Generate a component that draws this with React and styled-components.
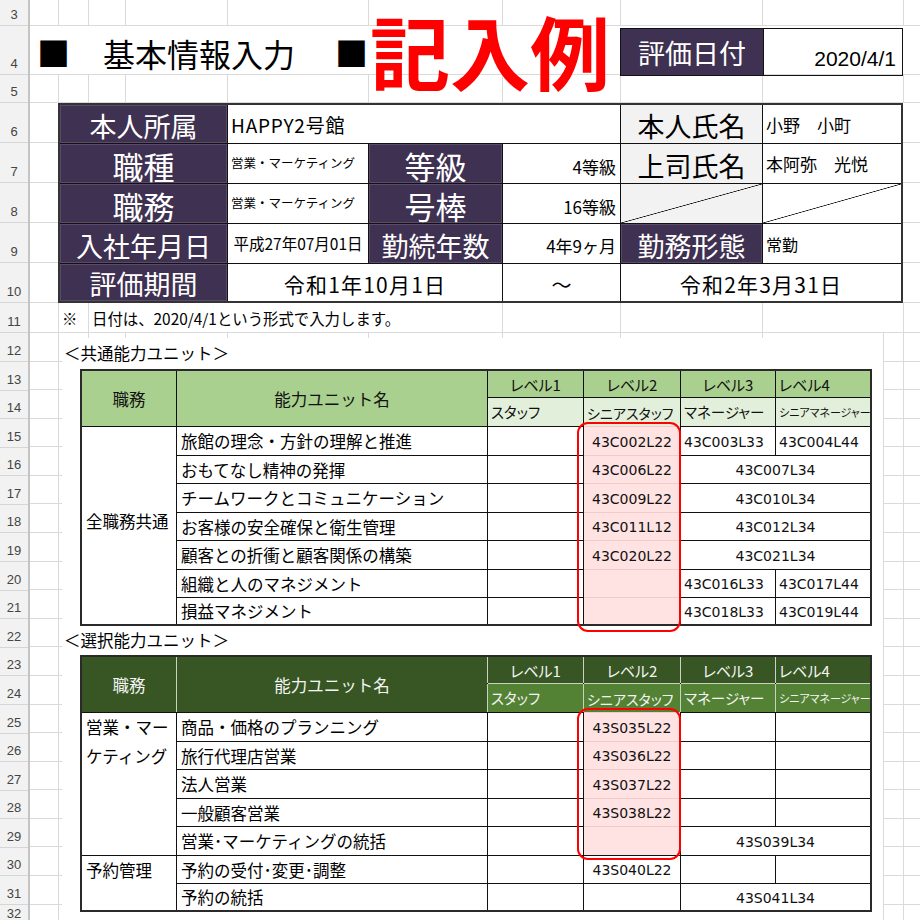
import React from 'react';
import styled, { createGlobalStyle } from 'styled-components';

const JP = `"Noto Sans CJK JP", "Noto Sans", sans-serif`;
const CODE = `"DejaVu Sans", Verdana, sans-serif`;
const GRID = '#dadada';
const PURPLE = '#3f3151';
const PINK = '#ffe3e3';

const vl = (x) => `linear-gradient(${GRID},${GRID}) ${x}px 0 / 1px 100% no-repeat`;
const vseg = (x, y, h) => `linear-gradient(${GRID},${GRID}) ${x}px ${y}px / 1px ${h}px no-repeat`;
const hl = (y) => `linear-gradient(${GRID},${GRID}) 0 ${y}px / 100% 1px no-repeat`;
const COLS = [28, 58, 95, 197, 338, 472, 590, 732, 873];

const GlobalStyle = createGlobalStyle`
  html, body { margin: 0; padding: 0; background: #fff; }
  body { font-family: ${JP}; color: #000; overflow: hidden; }
`;

const Sheet = styled.div`
  display: flex;
  width: 920px;
  height: 920px;
  overflow: hidden;
  background: #fff;
`;

const RowHeaderCol = styled.div`
  width: 28px;
  flex-shrink: 0;
  background: #f2f2f2;
  border-right: 2px solid #c4c4c4;
  display: flex;
  flex-direction: column;
`;

const RowNum = styled.div`
  height: ${(p) => p.$h}px;
  flex-shrink: 0;
  box-sizing: border-box;
  border-bottom: 1px solid #d6d6d6;
  display: flex;
  align-items: flex-end;
  justify-content: center;
  padding-bottom: 3px;
  font: 13px/14px "Liberation Sans", Arial, sans-serif;
  color: #444;
`;

const Body = styled.div`
  flex: 1;
  min-width: 0;
  display: flex;
  flex-direction: column;
`;

/* rows 3-5: gridlines hidden in row 4 where the title text overflows */
const TopBand = styled.div`
  height: 103px;
  flex-shrink: 0;
  display: flex;
  align-items: center;
  background: ${[
    hl(25), hl(74), hl(102),
    ...COLS.map((x) => vseg(x, 0, 26)),
    ...COLS.map((x) => vseg(x, 75, 28)),
  ].join(',')};
`;

const SquareMark = styled.div`
  width: ${(p) => p.$w}px;
  margin-left: ${(p) => p.$ml || 0}px;
  flex-shrink: 0;
  font-size: 33px;
  line-height: 1.2;
  padding-top: 2px;
`;

const TitleText = styled.div`
  width: 232px;
  flex-shrink: 0;
  font-size: 32px;
  line-height: 1.2;
  padding-top: 4px;
`;

const StampText = styled.div`
  width: 250px;
  flex-shrink: 0;
  font-size: 80px;
  font-weight: 700;
  line-height: 1.2;
  color: #ff0000;
  white-space: nowrap;
  margin-top: -6px;
`;

const DateBox = styled.div`
  display: flex;
  width: 283px;
  height: 48px;
  margin-top: 1px;
  box-sizing: border-box;
  border: 1px solid #111;
  flex-shrink: 0;
`;

const DateLabel = styled.div`
  width: 142px;
  background: ${PURPLE};
  color: #fff;
  font-size: 27px;
  display: flex;
  align-items: center;
  justify-content: center;
  border-right: 1px solid #111;
`;

const DateValue = styled.div`
  flex: 1;
  display: flex;
  align-items: flex-end;
  justify-content: flex-end;
  padding: 0 6px 6px 0;
  font: 21px/1 "Liberation Sans", Arial, sans-serif;
`;

const InfoBand = styled.div`
  height: 200px;
  flex-shrink: 0;
  padding-left: 28px;
  box-sizing: border-box;
  background: repeating-linear-gradient(to bottom, transparent 0 39px, ${GRID} 39px 40px);
`;

const InfoGrid = styled.div`
  display: grid;
  width: max-content;
  grid-template-columns: 167px 140px 133px 117px 141px 138px;
  grid-template-rows: 38px 39px 39px 39px 37px;
  gap: 1px;
  background: #111;
  border: 2px solid #333;
`;

const Label = styled.div`
  background: ${(p) => (p.$light ? '#f2f2f2' : PURPLE)};
  color: ${(p) => (p.$light ? '#000' : '#fff')};
  font-size: ${(p) => (p.$big ? 31 : 27)}px;
  line-height: 1;
  display: flex;
  align-items: flex-end;
  justify-content: center;
  padding-bottom: ${(p) => (p.$big ? 2 : 4)}px;
  box-shadow: ${(p) => (p.$light ? 'none' : 'inset 0 0 0 1px #5a4b6b')};
  white-space: nowrap;
`;

const Value = styled.div`
  grid-column: span ${(p) => p.$cs || 1};
  background: #fff;
  font-size: ${(p) => p.$fs || 17}px;
  letter-spacing: ${(p) => p.$ls || 0}px;
  line-height: 1;
  display: flex;
  align-items: center;
  justify-content: ${(p) => p.$align || 'flex-start'};
  padding: ${(p) => p.$pt || 0}px 4px 0 ${(p) => (p.$align === 'center' ? 4 : 3)}px;
  white-space: nowrap;
`;

const DiagCell = styled.div`
  background:
    linear-gradient(to bottom right, transparent calc(50% - 0.7px), #000 50%, transparent calc(50% + 0.7px)),
    ${(p) => (p.$gray ? '#f2f2f2' : '#fff')};
`;

const NoteRow = styled.div`
  height: 30px;
  flex-shrink: 0;
  box-sizing: border-box;
  border-bottom: 1px solid ${GRID};
  background: ${[28, 58, 472, 590, 732, 873].map(vl).join(',')};
  display: flex;
  align-items: center;
  padding-top: 3px;
  font-size: 15.4px;
  line-height: 1;
`;

const NoteMark = styled.span`
  width: 30px;
  margin-left: 32px;
  flex-shrink: 0;
`;

const LowerBand = styled.div`
  flex: 1;
  display: flex;
  padding-left: 32px;
  background:
    ${[28, 58, 95, 197, 338, 472, 590, 732, 853, 873].map(vl).join(',')},
    repeating-linear-gradient(to bottom, transparent 0 27.58px, ${GRID} 27.58px 28.58px);
`;

const WhiteArea = styled.div`
  width: 821px;
  margin-top: 5px;
  background: #fff;
  display: flex;
  flex-direction: column;
`;

const SectionLabel = styled.div`
  height: ${(p) => p.$h}px;
  display: flex;
  align-items: center;
  padding-left: 2px;
  font-size: 16.5px;
  line-height: 1;
  box-sizing: border-box;
`;

const UnitTable = styled.div`
  position: relative;
  display: grid;
  width: max-content;
  margin-left: 18px;
  grid-template-columns: 94px 310px 95px 96px 94px 94px;
  grid-template-rows: 26px 28px 28px 27px 28px 27px 28px 27px 26px;
  gap: 1px;
  background: #111;
  border: 2px solid #2a2a2a;
`;

const HeadCell = styled.div`
  grid-row: span ${(p) => p.$rs || 1};
  background: ${(p) => p.$bg};
  color: ${(p) => (p.$dark ? '#f4f4f4' : '#111')};
  font-size: ${(p) => p.$fs || 15}px;
  font-feature-settings: ${(p) => (p.$palt ? '"palt"' : 'normal')};
  line-height: 1;
  display: flex;
  align-items: center;
  justify-content: ${(p) => (p.$left ? 'flex-start' : 'center')};
  padding: 1px 0 0 ${(p) => (p.$left ? 3 : 0)}px;
  white-space: nowrap;
  box-shadow: ${(p) => p.$shadow || 'none'};
`;

const GroupCell = styled.div`
  grid-row: span ${(p) => p.$rs || 1};
  background: #fff;
  font-size: 16.5px;
  line-height: ${(p) => (p.$top ? '28.5px' : '1')};
  display: flex;
  align-items: ${(p) => (p.$top ? 'flex-start' : 'center')};
  padding: ${(p) => (p.$top ? '0 6px 0 4px' : '0 0 8px 4px')};
`;

const NameCell = styled.div`
  background: #fff;
  font-size: 16.5px;
  line-height: 1;
  display: flex;
  align-items: center;
  padding: 1px 0 0 4px;
  white-space: nowrap;
`;

const CodeCell = styled.div`
  grid-column: span ${(p) => p.$cs || 1};
  background: ${(p) => (p.$pink ? PINK : '#fff')};
  box-shadow: ${(p) => (p.$pink ? `0 -1px 0 #f3c9c9` : 'none')};
  font: 14px/1 ${CODE};
  color: #111;
  display: flex;
  align-items: center;
  justify-content: ${(p) => (p.$left ? 'flex-start' : 'center')};
  padding: 1px 0 0 ${(p) => (p.$left ? 3 : 0)}px;
  white-space: nowrap;
`;

const Highlight = styled.div`
  position: absolute;
  left: 495px;
  top: 51px;
  width: 104px;
  height: ${(p) => p.$h}px;
  box-sizing: border-box;
  border: 2.5px solid #ff0000;
  border-radius: 11px;
  pointer-events: none;
`;

const rowHeights = [
  ['3', 26], ['4', 49], ['5', 28],
  ['6', 40], ['7', 40], ['8', 40], ['9', 40], ['10', 40],
  ['11', 30], ['12', 29],
  ...Array.from({ length: 19 }, (_, i) => [String(13 + i), 28.58]),
  ['32', 20],
];

const common = [
  { name: '旅館の理念・方針の理解と推進', l2: '43C002L22', l3: '43C003L33', l4: '43C004L44' },
  { name: 'おもてなし精神の発揮', l2: '43C006L22', l34: '43C007L34' },
  { name: 'チームワークとコミュニケーション', l2: '43C009L22', l34: '43C010L34' },
  { name: 'お客様の安全確保と衛生管理', l2: '43C011L12', l34: '43C012L34' },
  { name: '顧客との折衝と顧客関係の構築', l2: '43C020L22', l34: '43C021L34' },
  { name: '組織と人のマネジメント', l2: '', l3: '43C016L33', l4: '43C017L44' },
  { name: '損益マネジメント', l2: '', l3: '43C018L33', l4: '43C019L44' },
];

const selected = [
  { group: '営業・マーケティング', span: 5, name: '商品・価格のプランニング', l2: '43S035L22', pink: true, l3: '', l4: '' },
  { name: '旅行代理店営業', l2: '43S036L22', pink: true, l3: '', l4: '' },
  { name: '法人営業', l2: '43S037L22', pink: true, l3: '', l4: '' },
  { name: '一般顧客営業', l2: '43S038L22', pink: true, l3: '', l4: '' },
  { name: '営業･マーケティングの統括', l2: '', pink: true, l34: '43S039L34' },
  { group: '予約管理', span: 2, name: '予約の受付･変更･調整', l2: '43S040L22', l3: '', l4: '' },
  { name: '予約の統括', l2: '', l34: '43S041L34' },
];

function UnitRows({ rows, pinkAll, firstGroup }) {
  const out = [];
  rows.forEach((r, i) => {
    if (firstGroup && i === 0) {
      out.push(<GroupCell key="g" $rs={rows.length}>{firstGroup}</GroupCell>);
    }
    if (r.group) {
      out.push(<GroupCell key={`g${i}`} $rs={r.span} $top>{r.group}</GroupCell>);
    }
    out.push(<NameCell key={`n${i}`}>{r.name}</NameCell>);
    out.push(<CodeCell key={`a${i}`} />);
    out.push(<CodeCell key={`b${i}`} $pink={pinkAll || r.pink}>{r.l2}</CodeCell>);
    if (r.l34 !== undefined) {
      out.push(<CodeCell key={`c${i}`} $cs={2}>{r.l34}</CodeCell>);
    } else {
      out.push(<CodeCell key={`c${i}`} $left>{r.l3}</CodeCell>);
      out.push(<CodeCell key={`d${i}`} $left>{r.l4}</CodeCell>);
    }
  });
  return out;
}

function TableHeader({ dark }) {
  const top = dark ? '#375623' : '#a9d08e';
  const sub = dark ? '#548235' : '#e2efda';
  const sh = (l, t) =>
    dark ? [l && '-1px 0 0 #c9d3c1', t && '0 -1px 0 #c9d3c1'].filter(Boolean).join(',') || 'none' : 'none';
  return (
    <>
      <HeadCell $rs={2} $bg={top} $dark={dark} $fs={16.5}>職務</HeadCell>
      <HeadCell $rs={2} $bg={top} $dark={dark} $fs={16.5} $shadow={sh(true)}>能力ユニット名</HeadCell>
      <HeadCell $bg={top} $dark={dark} $palt $shadow={sh(true)}>レベル1</HeadCell>
      <HeadCell $bg={top} $dark={dark} $palt $shadow={sh(true)}>レベル2</HeadCell>
      <HeadCell $bg={top} $dark={dark} $palt $shadow={sh(true)}>レベル3</HeadCell>
      <HeadCell $bg={top} $dark={dark} $palt $left $shadow={sh(true)}>レベル4</HeadCell>
      <HeadCell $bg={sub} $dark={dark} $palt $left $fs={14.5} $shadow={sh(true, true)}>スタッフ</HeadCell>
      <HeadCell $bg={sub} $dark={dark} $palt $left $fs={14} $shadow={sh(true, true)}>シニアスタッフ</HeadCell>
      <HeadCell $bg={sub} $dark={dark} $palt $left $fs={14.5} $shadow={sh(true, true)}>マネージャー</HeadCell>
      <HeadCell $bg={sub} $dark={dark} $palt $left $fs={11} $shadow={sh(true, true)}>シニアマネージャー</HeadCell>
    </>
  );
}

export default function App() {
  return (
    <>
      <GlobalStyle />
      <Sheet>
        <RowHeaderCol>
          {rowHeights.map(([n, h]) => (
            <RowNum key={n} $h={h}>{n}</RowNum>
          ))}
        </RowHeaderCol>
        <Body>
          <TopBand>
            <SquareMark $ml={7} $w={66}>■</SquareMark>
            <TitleText>基本情報入力</TitleText>
            <SquareMark $w={35}>■</SquareMark>
            <StampText>記入例</StampText>
            <DateBox>
              <DateLabel>評価日付</DateLabel>
              <DateValue>2020/4/1</DateValue>
            </DateBox>
          </TopBand>
          <InfoBand>
            <InfoGrid>
              <Label>本人所属</Label>
              <Value $cs={3} $fs={19} $ls={0.8}>HAPPY2号館</Value>
              <Label $light>本人氏名</Label>
              <Value $fs={17}>小野　小町</Value>

              <Label $big>職種</Label>
              <Value $fs={12.5}>営業・マーケティング</Value>
              <Label $big>等級</Label>
              <Value $align="flex-end" $pt={5}>4等級</Value>
              <Label $light>上司氏名</Label>
              <Value $fs={17}>本阿弥　光悦</Value>

              <Label $big>職務</Label>
              <Value $fs={12.5}>営業・マーケティング</Value>
              <Label $big>号棒</Label>
              <Value $align="flex-end" $pt={5}>16等級</Value>
              <DiagCell $gray />
              <DiagCell />

              <Label>入社年月日</Label>
              <Value $fs={15.5} $align="center">平成27年07月01日</Value>
              <Label>勤続年数</Label>
              <Value $align="flex-end" $pt={3}>4年9ヶ月</Value>
              <Label>勤務形態</Label>
              <Value $fs={16}>常勤</Value>

              <Label>評価期間</Label>
              <Value $cs={2} $fs={21} $ls={1.2} $align="center" $pt={4}>令和1年10月1日</Value>
              <Value $fs={20} $align="center" $pt={4}>～</Value>
              <Value $cs={2} $fs={21} $ls={1.2} $align="center" $pt={4}>令和2年3月31日</Value>
            </InfoGrid>
          </InfoBand>
          <NoteRow>
            <NoteMark>※</NoteMark>
            <span>日付は、2020/4/1という形式で入力します。</span>
          </NoteRow>
          <LowerBand>
            <WhiteArea>
              <SectionLabel $h={31}>＜共通能力ユニット＞</SectionLabel>
              <UnitTable>
                <TableHeader />
                <UnitRows rows={common} pinkAll firstGroup="全職務共通" />
                <Highlight $h={210} />
              </UnitTable>
              <SectionLabel $h={29}>＜選択能力ユニット＞</SectionLabel>
              <UnitTable>
                <TableHeader dark />
                <UnitRows rows={selected} />
                <Highlight $h={152} />
              </UnitTable>
            </WhiteArea>
          </LowerBand>
        </Body>
      </Sheet>
    </>
  );
}
